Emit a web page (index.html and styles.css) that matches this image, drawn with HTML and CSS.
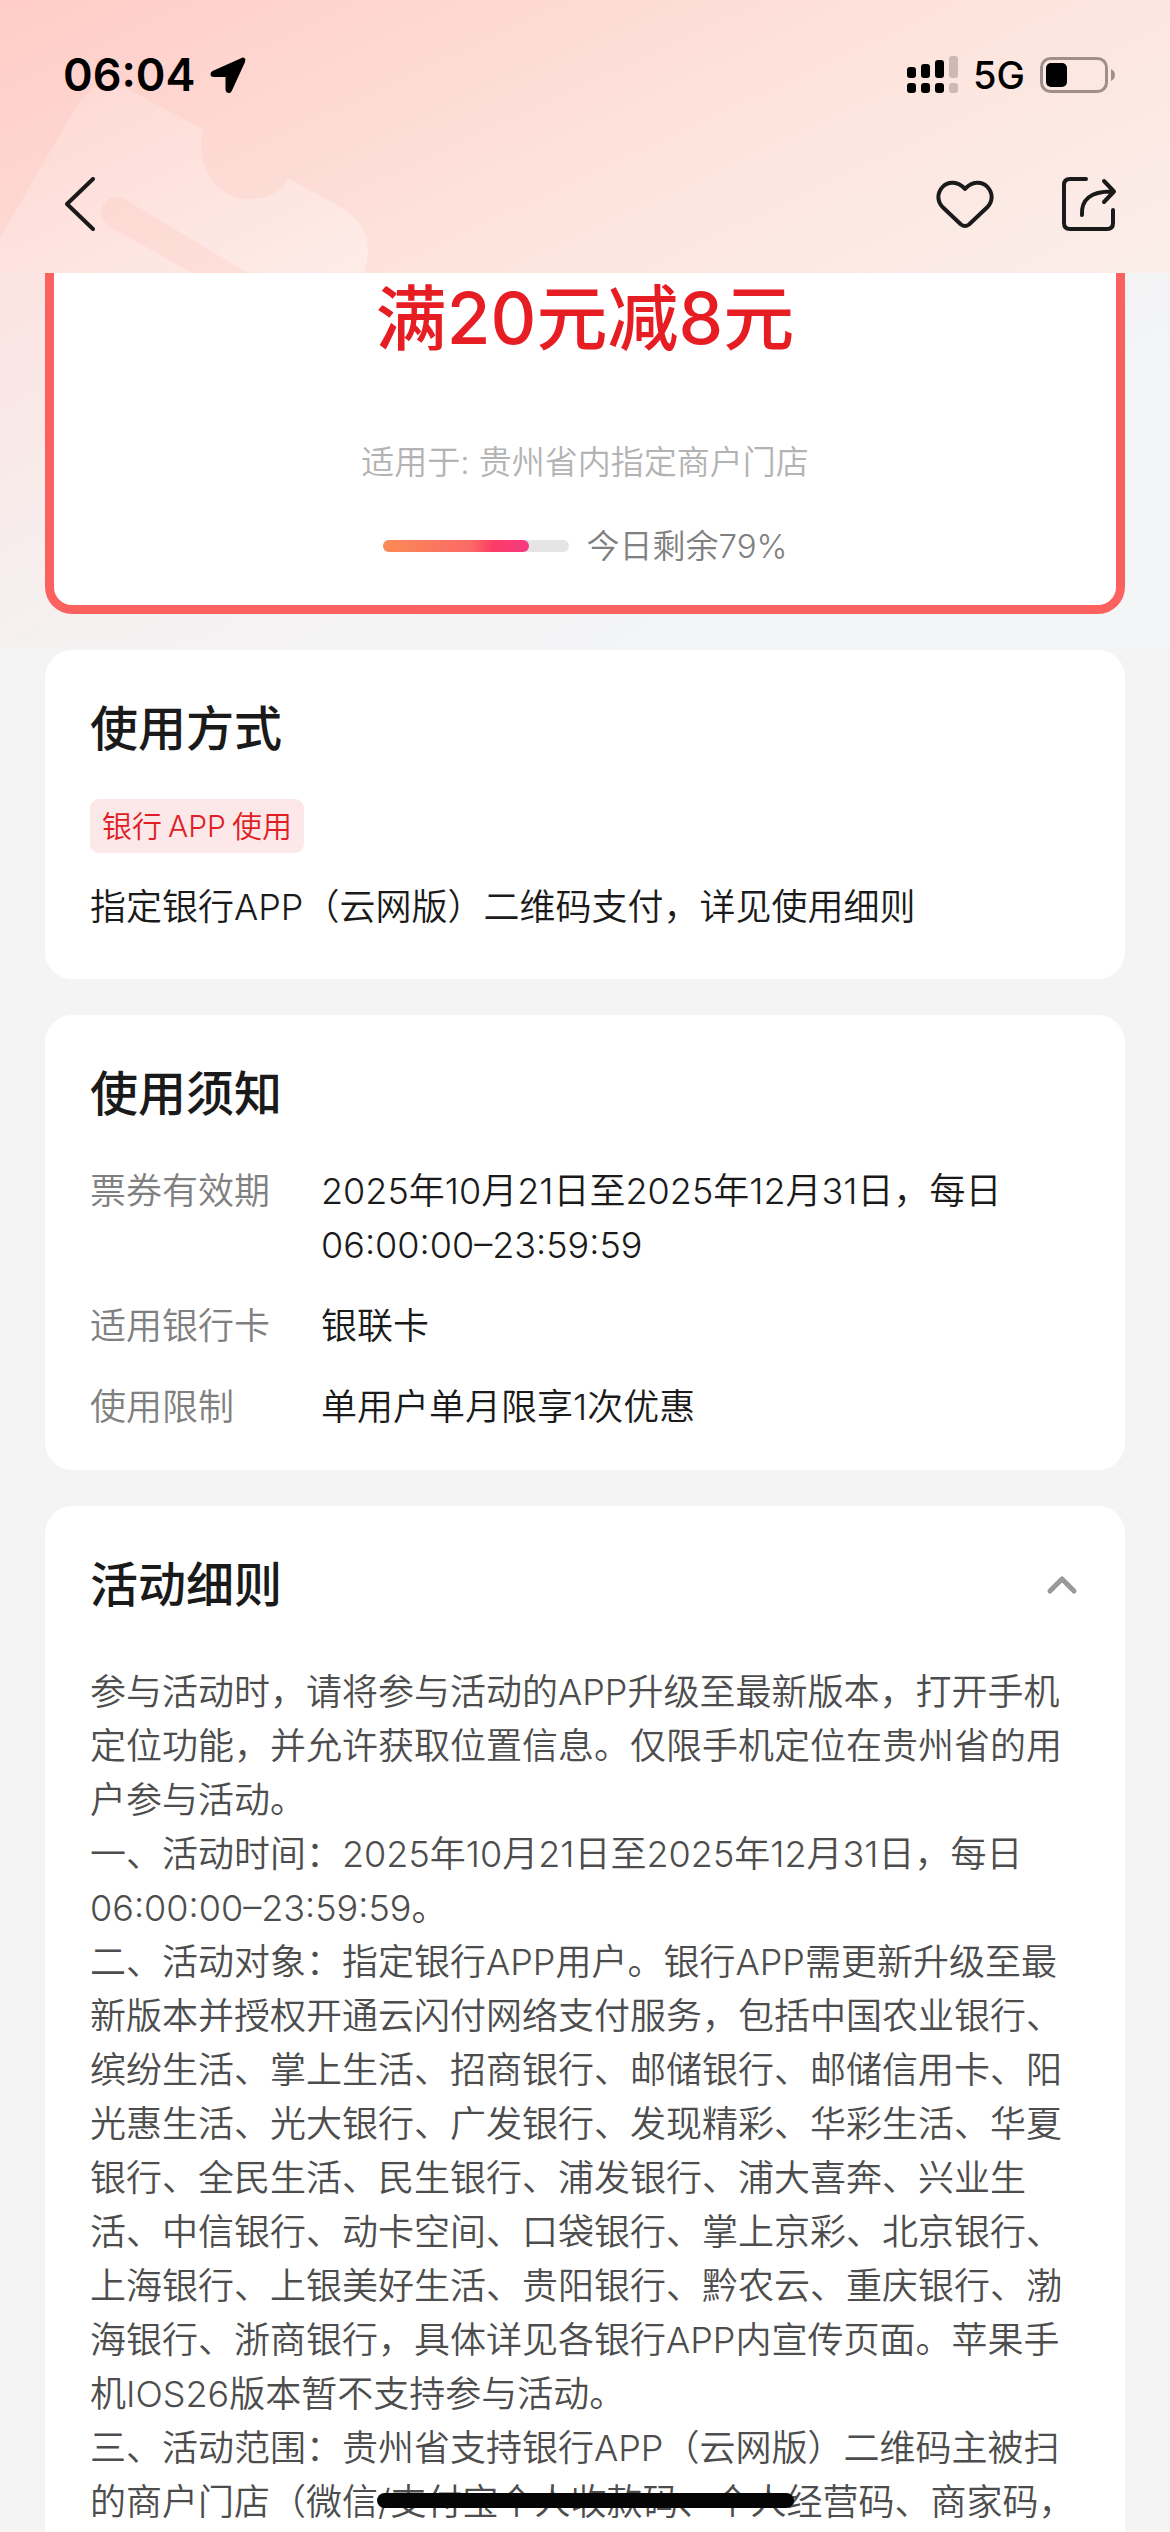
FILE: index.html
```html
<!DOCTYPE html>
<html lang="zh-CN">
<head>
  <meta charset="utf-8">
  <meta name="viewport" content="width=device-width, initial-scale=1">
  <title>满20元减8元</title>
  <link rel="stylesheet" href="styles.css">
</head>
<body>
  <div class="app">
    <header class="header">
      <svg class="header-art" width="380" height="273" viewBox="0 0 380 273" aria-hidden="true">
        <defs>
          <linearGradient id="ticket" x1="0" y1="0" x2="1" y2="1">
            <stop offset="0" stop-color="#fff" stop-opacity=".14"/>
            <stop offset="1" stop-color="#fff" stop-opacity=".34"/>
          </linearGradient>
        </defs>
        <path fill="url(#ticket)" d="M0 238 76 107Q92 78 124 88Q134 91 142 97L203 129Q196 160 215 184Q232 202 256 199Q278 196 289 179L344 209Q378 232 364 273H248L126 200Q112 191 103 205Q97 220 112 228L192 273H0Z"/>
      </svg>
      <div class="status-bar">
        <div class="status-group">
          <span class="clock">06:04</span>
          <svg width="36" height="37" viewBox="0 0 36 37" aria-label="定位">
            <path d="M30.500 1.500 2.500 14Q0 15.500 .5 18Q1 20 3.500 20H15.500V32.500Q16 36 19 36Q21 36 22 33.500L35 5Q36 2 34.500 1Q33 0 30.500 1.500Z"/>
          </svg>
        </div>
        <div class="status-group">
          <svg width="51" height="38" viewBox="0 0 51 38" aria-label="信号">
            <rect y="11" width="9" height="11" rx="3"/>
            <rect x="14" y="8" width="9" height="14" rx="3"/>
            <rect x="28" y="4" width="9" height="18" rx="3"/>
            <rect y="27" width="9" height="10" rx="3"/>
            <rect x="14" y="27" width="9" height="10" rx="3"/>
            <rect x="28" y="27" width="9" height="10" rx="3"/>
            <g fill="#cdbab4"><rect x="42" width="9" height="22" rx="3"/><rect x="42" y="27" width="9" height="10" rx="3"/></g>
          </svg>
          <span class="network">5G</span>
          <svg width="76" height="36" viewBox="0 0 76 36" aria-label="电量">
            <rect x="1.500" y="1.500" width="65" height="33" rx="9" fill="none" stroke="#9f8f8a" stroke-width="3"/>
            <rect x="6" y="6" width="21" height="24" rx="5"/>
            <path d="M71 12Q75 14 75 18T71 24Z" fill="#9f8f8a"/>
          </svg>
        </div>
      </div>
      <nav class="nav-bar">
        <button class="icon-button" type="button" aria-label="返回">
          <svg width="30" height="54" viewBox="0 0 30 54"><path d="M28 2 2 27 28 52"/></svg>
        </button>
        <div class="nav-actions">
          <button class="icon-button" type="button" aria-label="收藏">
            <svg width="58" height="54" viewBox="0 0 58 54"><path d="M29 12C22 4 12 4 6.500 10C1 16 1 24 6.500 30L25 47.500Q29 50.500 33 47.500L51.500 30C57 24 57 16 51.500 10C46 4 36 4 29 12Z"/></svg>
          </button>
          <button class="icon-button" type="button" aria-label="分享">
            <svg width="56" height="54" viewBox="0 0 56 54"><path d="M25 2H9Q3 2 3 8V46Q3 52 9 52H46Q52 52 52 46V33M21 38C20 23 29 14 52 14.500M43 4 53 14.500 43 25"/></svg>
          </button>
        </div>
      </nav>
    </header>

    <main class="content">
      <section class="coupon">
        <h1 class="coupon-title">满20元减8元</h1>
        <p class="coupon-scope">适用于: 贵州省内指定商户门店</p>
        <div class="coupon-stock">
          <div class="stock-track" role="progressbar" aria-label="今日剩余" aria-valuenow="79" aria-valuemin="0" aria-valuemax="100">
            <div class="stock-fill" style="width: 79%"></div>
          </div>
          <span>今日剩余79%</span>
        </div>
      </section>

      <section class="card">
        <h2 class="card-title">使用方式</h2>
        <div class="tag"><span>银行</span> <span>APP</span> <span>使用</span></div>
        <p class="usage">指定银行APP（云网版）二维码支付，详见使用细则</p>
      </section>

      <section class="card card-notice">
        <h2 class="card-title">使用须知</h2>
        <dl class="facts">
          <dt>票券有效期</dt>
          <dd>2025年10月21日至2025年12月31日，每日06:00:00–23:59:59</dd>
          <dt>适用银行卡</dt>
          <dd>银联卡</dd>
          <dt>使用限制</dt>
          <dd>单用户单月限享1次优惠</dd>
        </dl>
      </section>

      <section class="card">
        <div class="rules-head">
          <h2 class="card-title">活动细则</h2>
          <button class="icon-button toggle" type="button" aria-label="收起" aria-expanded="true">
            <svg width="36" height="36" viewBox="0 0 36 36"><path d="M6 24 18 12 30 24"/></svg>
          </button>
        </div>
        <div class="rules">
          <p>参与活动时，请将参与活动的APP升级至最新版本，打开手机定位功能，并允许获取位置信息。仅限手机定位在贵州省的用户参与活动。</p>
          <p>一、活动时间：2025年10月21日至2025年12月31日，每日06:00:00–23:59:59。</p>
          <p>二、活动对象：指定银行APP用户。银行APP需更新升级至最新版本并授权开通云闪付网络支付服务，包括中国农业银行、缤纷生活、掌上生活、招商银行、邮储银行、邮储信用卡、阳光惠生活、光大银行、广发银行、发现精彩、华彩生活、华夏银行、全民生活、民生银行、浦发银行、浦大喜奔、兴业生活、中信银行、动卡空间、口袋银行、掌上京彩、北京银行、上海银行、上银美好生活、贵阳银行、黔农云、重庆银行、渤海银行、浙商银行，具体详见各银行APP内宣传页面。苹果手机IOS26版本暂不支持参与活动。</p>
          <p>三、活动范围：贵州省支持银行APP（云网版）二维码主被扫的商户门店（微信/支付宝个人收款码、个人经营码、商家码，</p>
        </div>
      </section>
    </main>
    <div class="home-indicator"></div>
  </div>
</body>
</html>
```
FILE: styles.css
```css
* {
  box-sizing: border-box;
}

body,
h1,
h2,
p,
dl,
dd {
  margin: 0;
}

body {
  font-family: Inter, "Noto Sans CJK SC", sans-serif;
  font-size: 36px;
  font-weight: 350;
  line-height: 54px;
  color: #1a1a1a;
  background: #f4f4f4;
}

.app {
  position: relative;
  display: flex;
  flex-direction: column;
  height: 100vh;
}

/* Header */

.header {
  position: relative;
  flex: none;
  padding-bottom: 15px;
  background: linear-gradient(155deg, #ffccc7 0%, #fed8d2 28%, #fde5de 60%, #fbeeea 100%);
}

.header-art {
  position: absolute;
  left: 0;
  bottom: 0;
}

.status-bar,
.nav-bar {
  position: relative;
  display: flex;
  align-items: center;
  justify-content: space-between;
}

.status-bar {
  height: 150px;
  padding: 0 54px 0 63px;
  color: #000;
}

.status-group {
  display: flex;
  align-items: center;
  gap: 15px;
}

.clock {
  font-size: 45px;
  font-weight: 600;
}

.network {
  font-size: 38px;
  font-weight: 500;
}

.nav-bar {
  height: 108px;
  padding: 0 53px 0 65px;
}

.nav-actions {
  display: flex;
  gap: 67px;
}

.icon-button {
  display: flex;
  padding: 0;
  border: 0;
  background: none;
  color: #1a1a1a;
}

.icon-button path {
  fill: none;
  stroke: currentColor;
  stroke-width: 4;
  stroke-linecap: round;
  stroke-linejoin: round;
}

/* Scrolling content */

.content {
  flex: 1;
  min-height: 0;
  padding: 0 45px 45px;
  overflow-y: auto;
  scrollbar-width: none;
  background: linear-gradient(150deg, #fbe3e1 0%, #f5f1f1 38%, #f3f5f7 75%) top / 100% 374px no-repeat;
}

.coupon {
  display: flex;
  flex-direction: column;
  align-items: center;
  padding-bottom: 35px;
  border: 9px solid #fb625f;
  border-top: 0;
  border-radius: 0 0 27px 27px;
  background: #fff;
  font-size: 33px;
  line-height: 48px;
}

.coupon-title {
  margin-bottom: 75px;
  font-size: 71px;
  font-weight: 500;
  line-height: 90px;
  color: #e71d24;
}

.coupon-scope {
  margin-bottom: 36px;
  color: #b3b3b3;
}

.coupon-stock {
  display: flex;
  align-items: center;
  gap: 18px;
  color: #808080;
}

.stock-track {
  width: 186px;
  height: 12px;
  border-radius: 6px;
  background: #e5e5e5;
}

.stock-fill {
  height: 100%;
  border-radius: 6px;
  background: linear-gradient(100deg, #fb8b55, #fb6a66 60%, #fb3d66 75%, #f73a80);
}

.card {
  margin-top: 36px;
  padding: 43px 45px 45px;
  border-radius: 27px;
  background: #fff;
}

.card-notice {
  padding-bottom: 36px;
}

.card-title {
  margin-bottom: 34px;
  font-size: 48px;
  font-weight: 500;
  line-height: 72px;
}

.tag {
  display: flex;
  gap: 6px;
  width: fit-content;
  padding: 0 12px;
  border-radius: 9px;
  background: #fde8e9;
  font-size: 30px;
  color: #e01e25;
}

.usage {
  margin-top: 27px;
}

.facts {
  display: grid;
  grid-template-columns: 180px 1fr;
  gap: 27px 51px;
}

.facts dt {
  color: #808080;
}

.rules-head {
  display: flex;
  align-items: center;
  justify-content: space-between;
  margin-bottom: 44px;
}

.rules-head .card-title {
  margin-bottom: 0;
}

.toggle {
  color: #999;
}

.toggle path {
  stroke-width: 5;
}

.rules {
  color: #4d4d4d;
}

.home-indicator {
  position: fixed;
  left: 50%;
  bottom: 24px;
  width: 417px;
  height: 15px;
  margin-left: -208px;
  border-radius: 8px;
  background: #050505;
}
```
